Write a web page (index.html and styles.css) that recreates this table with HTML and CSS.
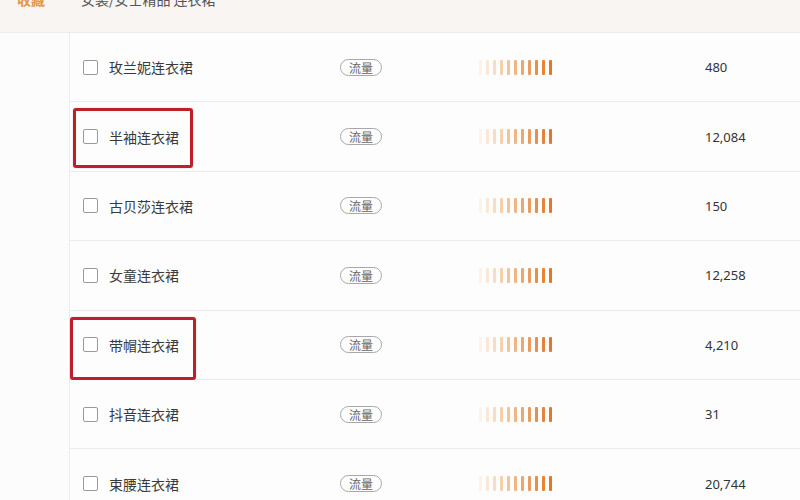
FILE: index.html
```html
<!DOCTYPE html>
<html>
<head>
<meta charset="UTF-8">
<title>连衣裙 关键词</title>
<link rel="stylesheet" href="styles.css">
</head>
<body>

<div class="header">
  <span class="header-tab">收藏</span>
  <span class="header-path">女装/女士精品 连衣裙</span>
</div>

<div class="main">
  <div class="side"></div>

  <div class="list">
    <div class="row">
      <div class="cell name"><span class="check"></span>玫兰妮连衣裙</div>
      <div class="cell tag-cell"><span class="tag">流量</span></div>
      <div class="cell bars"><i></i><i></i><i></i><i></i><i></i><i></i><i></i><i></i><i></i><i></i><i></i></div>
      <div class="cell num">480</div>
    </div>
    <div class="row">
      <div class="mark mark-a"></div>
      <div class="cell name"><span class="check"></span>半袖连衣裙</div>
      <div class="cell tag-cell"><span class="tag">流量</span></div>
      <div class="cell bars"><i></i><i></i><i></i><i></i><i></i><i></i><i></i><i></i><i></i><i></i><i></i></div>
      <div class="cell num">12,084</div>
    </div>
    <div class="row">
      <div class="cell name"><span class="check"></span>古贝莎连衣裙</div>
      <div class="cell tag-cell"><span class="tag">流量</span></div>
      <div class="cell bars"><i></i><i></i><i></i><i></i><i></i><i></i><i></i><i></i><i></i><i></i><i></i></div>
      <div class="cell num">150</div>
    </div>
    <div class="row">
      <div class="cell name"><span class="check"></span>女童连衣裙</div>
      <div class="cell tag-cell"><span class="tag">流量</span></div>
      <div class="cell bars"><i></i><i></i><i></i><i></i><i></i><i></i><i></i><i></i><i></i><i></i><i></i></div>
      <div class="cell num">12,258</div>
    </div>
    <div class="row">
      <div class="mark mark-b"></div>
      <div class="cell name"><span class="check"></span>带帽连衣裙</div>
      <div class="cell tag-cell"><span class="tag">流量</span></div>
      <div class="cell bars"><i></i><i></i><i></i><i></i><i></i><i></i><i></i><i></i><i></i><i></i><i></i></div>
      <div class="cell num">4,210</div>
    </div>
    <div class="row">
      <div class="cell name"><span class="check"></span>抖音连衣裙</div>
      <div class="cell tag-cell"><span class="tag">流量</span></div>
      <div class="cell bars"><i></i><i></i><i></i><i></i><i></i><i></i><i></i><i></i><i></i><i></i><i></i></div>
      <div class="cell num">31</div>
    </div>
    <div class="row">
      <div class="cell name"><span class="check"></span>束腰连衣裙</div>
      <div class="cell tag-cell"><span class="tag">流量</span></div>
      <div class="cell bars"><i></i><i></i><i></i><i></i><i></i><i></i><i></i><i></i><i></i><i></i><i></i></div>
      <div class="cell num">20,744</div>
    </div>
  </div>
</div>

</body>
</html>
```

FILE: styles.css
```css
/* page */
body {
  margin: 0;
  width: 800px;
  height: 500px;
  overflow: hidden;
  background-color: #fcfcfd;
  color: #333333;
  font-family: "Noto Sans CJK SC", "Noto Sans", sans-serif;
}

.header {
  height: 32px;
  display: flex;
  align-items: flex-start;
  background-color: #f8f5f2;
  border-bottom: 1px solid #eeebe8;
  font-size: 14px;
  line-height: 14px;
}

.header-tab {
  margin: -8px 0 0 17px;
  width: 64px;
  color: #e4963f;
  font-weight: bold;
}

.header-path {
  margin-top: -8px;
  color: #555555;
}

/* body: empty left column and the keyword list */
.main {
  display: flex;
}

.side {
  width: 69px;
  flex: none;
  border-right: 1px solid #ebebef;
  background-color: #fcfcfd;
}

.list {
  flex: 1;
}

.row {
  position: relative;
  box-sizing: border-box;
  height: 69.4px;
  display: flex;
  align-items: center;
  border-bottom: 1px solid #ebebef;
  background-color: #fdfdfe;
}

.cell {
  display: flex;
  align-items: center;
}

.name {
  width: 257px;
  padding-left: 13px;
  font-size: 14px;
  color: #3a3a3a;
}

.check {
  width: 13px;
  height: 13px;
  margin-right: 11px;
  border: 1px solid #9a9a9a;
  border-radius: 2px;
  background-color: #ffffff;
}

.tag-cell {
  width: 138px;
}

.tag {
  box-sizing: border-box;
  height: 17px;
  padding: 0 8px;
  border: 1px solid #a8a8a8;
  border-radius: 9px;
  font-size: 12px;
  line-height: 15px;
  color: #666666;
}

/* the little heat meter */
.bars {
  width: 227px;
  gap: 4px;
  padding-left: 1px;
  box-sizing: border-box;
}

.bars i {
  width: 3px;
  height: 15px;
  border-radius: 1px;
}

.bars i:nth-child(1) { background-color: #fdf3ea; }
.bars i:nth-child(2) { background-color: #fbe7d6; }
.bars i:nth-child(3) { background-color: #f9dcc3; }
.bars i:nth-child(4) { background-color: #f6d0ad; }
.bars i:nth-child(5) { background-color: #f3c399; }
.bars i:nth-child(6) { background-color: #f0b584; }
.bars i:nth-child(7) { background-color: #eda871; }
.bars i:nth-child(8) { background-color: #eb9b5f; }
.bars i:nth-child(9) { background-color: #e98e4d; }
.bars i:nth-child(10) { background-color: #e7823c; }
.bars i:nth-child(11) { background-color: #e5752e; }

.num {
  font-family: "Noto Sans", sans-serif;
  font-size: 13px;
  color: #333333;
}

/* red highlight boxes drawn over rows */
.mark {
  position: absolute;
  border: 3px solid #bf1f28;
  border-radius: 3px;
  box-shadow: 0 0 1px rgba(191, 31, 40, 0.6);
}

.mark-a {
  left: 3px;
  top: 6px;
  width: 114px;
  height: 54px;
}

.mark-b {
  left: 0;
  top: 6px;
  width: 120px;
  height: 57px;
}
```
